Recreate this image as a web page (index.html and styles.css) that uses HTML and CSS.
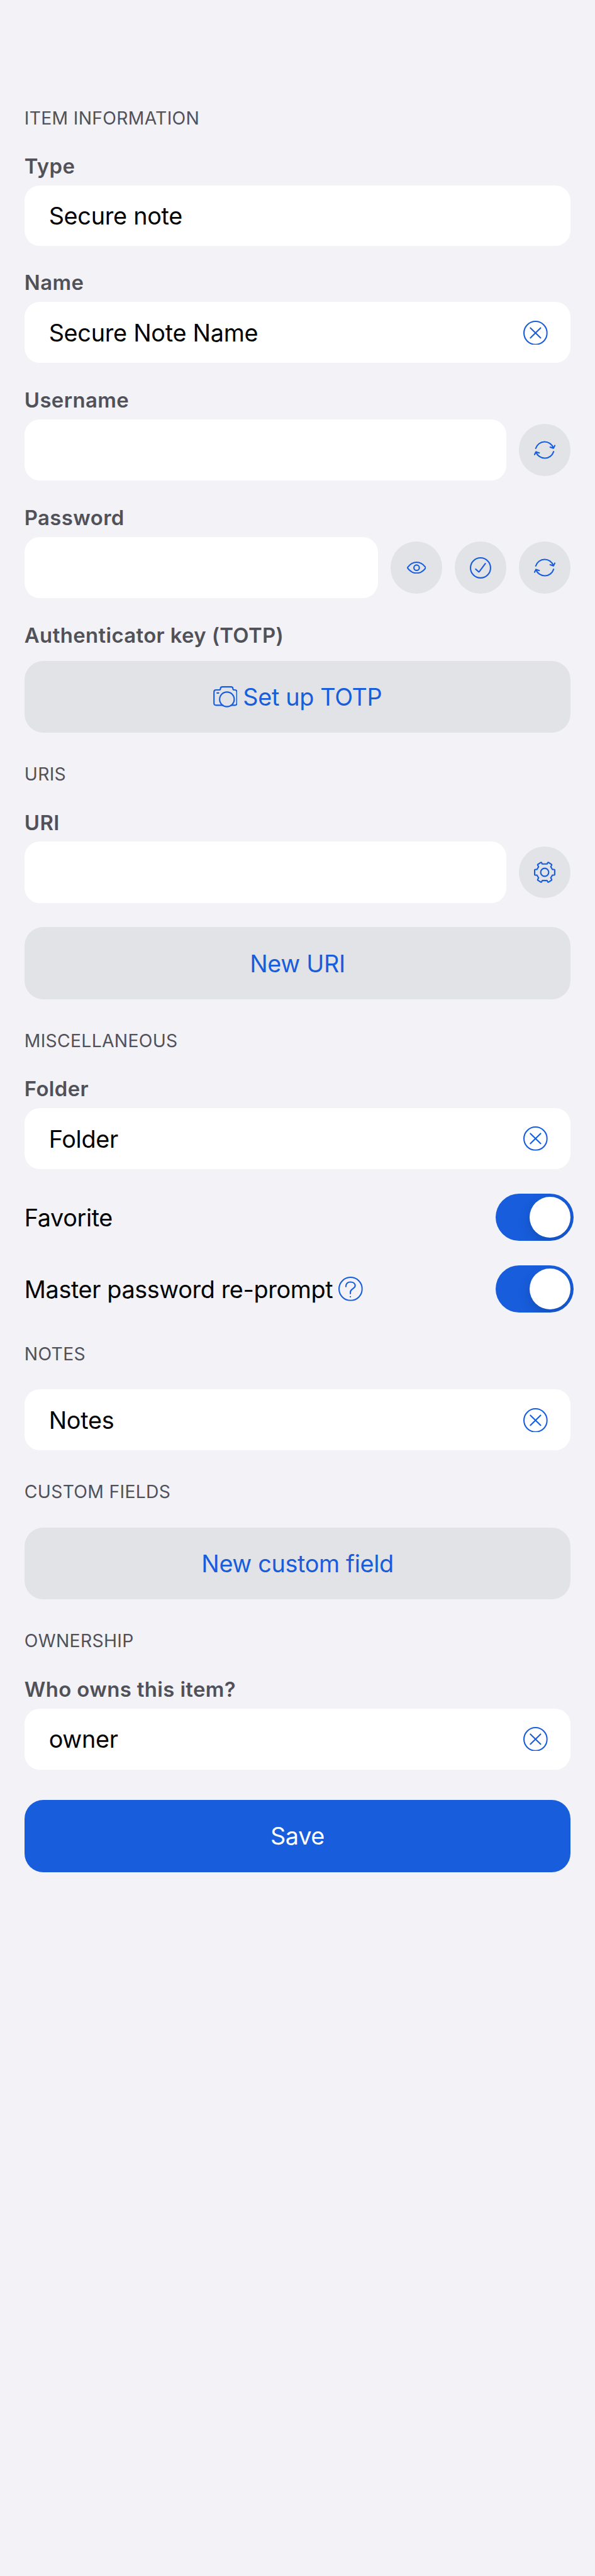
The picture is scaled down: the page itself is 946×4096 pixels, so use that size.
FILE: index.html
```html
<!DOCTYPE html>
<html lang="en">
<head>
<meta charset="utf-8">
<title>Edit item</title>
<link rel="stylesheet" href="styles.css">
</head>
<body>
<svg class="defs" aria-hidden="true">
  <symbol id="clear" viewBox="0 0 48 48"><circle cx="24" cy="24" r="22.7"/><path d="M14 14.2 34 33.8M34 14.2 14 33.8"/></symbol>
  <symbol id="refresh" viewBox="0 0 42 36"><path d="M3.4 14.8A18.3 18.3 0 0 1 38.2 14.2M31.900 12.300l6.300 2.200L41 9.200M38.600 21.200A18.300 18.300 0 0 1 3.900 22M10.300 23.700 3.900 21.500 1.200 26.900"/></symbol>
  <symbol id="eye" viewBox="0 0 38 24"><path d="M1.900 13.400Q.8 12 1.900 10.600C6.500 4.700 12.500 1.300 19 1.300S31.500 4.700 36.100 10.600Q37.200 12 36.100 13.400C31.500 19.300 25.500 22.700 19 22.700S6.500 19.300 1.900 13.400Z"/><circle cx="19" cy="12" r="5.300"/></symbol>
  <symbol id="check" viewBox="0 0 42 42"><circle cx="21" cy="21" r="19.700"/><path d="m11.600 23.400 5.300 5.100q.8.8 1.500 0l12-15.900"/></symbol>
  <symbol id="gear" viewBox="0 0 42 42"><path d="M36.200 15.500h3.300q1.200 0 1.200 1.200v8.600q0 1.200-1.200 1.200h-3.300l-3.200 5.400 1.800 3.200q.5.900-.4 1.500l-5.800 3.700q-1 .6-1.500-.4l-1.300-2.600h-9.600l-1.300 2.600q-.5 1-1.500.4l-5.800-3.700q-.9-.6-.4-1.500l1.800-3.200-3.200-5.400h-3.300q-1.200 0-1.200-1.200v-8.600q0-1.200 1.200-1.200h3.300l3.200-5.400-1.800-3.200q-.5-.9.4-1.500l5.800-3.700q1-.6 1.500.4l1.300 2.600h9.600l1.300-2.600q.5-1 1.500-.4l5.800 3.700q.9.600.4 1.500l-1.800 3.200Z"/><circle cx="21" cy="21" r="7.900"/></symbol>
  <symbol id="camera" viewBox="0 0 48 42"><path d="M18 37.600H5.500q-4 0-4-4V11.500q0-4 4-4h6.300q2.400 0 2.400-2.200 0-3.900 4-3.900h16.600q4 0 4 3.900 0 2.200 2.400 2.200h1.300q4 0 4 4v22.100q0 4-4 4H36M7.500 13.400h3.200"/><circle cx="27" cy="26" r="14.400"/></symbol>
  <symbol id="help" viewBox="0 0 48 48"><circle cx="24" cy="24" r="22.700"/><path d="M14.700 19.500c0-6.200 3.800-9 9-9 5.400 0 9.300 3 9.300 7.500 0 5.500-9.400 6-9.400 12v3.300M23.600 39.400v.2"/></symbol>
</svg>
<main class="form">
  <section class="section">
    <h2 class="heading">ITEM INFORMATION</h2>
    <div class="field"><label class="label">Type</label><div class="box box-menu"><span>Secure note</span></div></div>
    <div class="field"><label class="label">Name</label><div class="box"><span>Secure Note Name</span><svg class="icon i48"><use href="#clear"/></svg></div></div>
    <div class="field"><label class="label">Username</label>
      <div class="row"><div class="box"></div><button class="round"><svg class="icon i-refresh"><use href="#refresh"/></svg></button></div></div>
    <div class="field"><label class="label">Password</label>
      <div class="row"><div class="box"></div><button class="round"><svg class="icon i-eye"><use href="#eye"/></svg></button><button class="round"><svg class="icon i42"><use href="#check"/></svg></button><button class="round"><svg class="icon i-refresh"><use href="#refresh"/></svg></button></div></div>
    <div class="field field-loose"><label class="label">Authenticator key (TOTP)</label>
      <button class="button"><svg class="icon i-camera"><use href="#camera"/></svg><span>Set up TOTP</span></button></div>
  </section>
  <section class="section">
    <h2 class="heading">URIS</h2>
    <div class="field"><label class="label">URI</label>
      <div class="row"><div class="box"></div><button class="round"><svg class="icon i42"><use href="#gear"/></svg></button></div></div>
    <button class="button">New URI</button>
  </section>
  <section class="section">
    <h2 class="heading">MISCELLANEOUS</h2>
    <div class="field"><label class="label">Folder</label><div class="box"><span>Folder</span><svg class="icon i48"><use href="#clear"/></svg></div></div>
    <div class="toggle-row"><span>Favorite</span><div class="toggle"><div class="knob"></div></div></div>
    <div class="toggle-row"><span>Master password re-prompt</span><svg class="icon i48"><use href="#help"/></svg><div class="toggle"><div class="knob"></div></div></div>
  </section>
  <section class="section">
    <h2 class="heading">NOTES</h2>
    <div class="box"><span>Notes</span><svg class="icon i48"><use href="#clear"/></svg></div>
  </section>
  <section class="section">
    <h2 class="heading">CUSTOM FIELDS</h2>
    <button class="button">New custom field</button>
  </section>
  <section class="section">
    <h2 class="heading">OWNERSHIP</h2>
    <div class="field"><label class="label">Who owns this item?</label><div class="box"><span>owner</span><svg class="icon i48"><use href="#clear"/></svg></div></div>
  </section>
  <button class="button button-primary">Save</button>
</main>
</body>
</html>
```
FILE: styles.css
```css
/* 1rem is ten design pixels (a 3x canvas 1170 wide) */
html { font-size: 8.0885px; background: #f2f2f7; }
body { margin: 0; font-family: Inter, "Liberation Sans", sans-serif; color: #000; }
.defs { position: absolute; width: 0; height: 0; }

.form { display: flex; flex-direction: column; gap: 6rem; padding: 21.1rem 4.8rem 0; }
.section { display: flex; flex-direction: column; gap: 4.8rem; }
.heading { margin: 0; font-size: 3.5rem; line-height: 4.3rem; font-weight: 400; letter-spacing: .011em; color: #515159; }
.label { font-size: 4.07rem; line-height: 5.1rem; font-weight: 600; letter-spacing: .011em; color: #515159; }
.field { display: flex; flex-direction: column; gap: 1.2rem; }
.field-loose { gap: 2.4rem; }

.box { box-sizing: border-box; flex: 1 1 auto; display: flex; align-items: center; justify-content: space-between; height: 12rem; padding: 0 4.5rem 0 4.8rem; border-radius: 3rem; background: #fff; font-size: 4.67rem; letter-spacing: -.007em; }
.box-menu { flex: none; height: 11.8rem; }
.row { display: flex; align-items: center; gap: 2.4rem; }

button { border: 0; padding: 0; font-family: inherit; }
.round { flex: none; display: flex; align-items: center; justify-content: center; width: 10.2rem; height: 10.2rem; border-radius: 50%; background: #e2e3e7; }
.button { display: flex; align-items: center; justify-content: center; gap: 1.1rem; height: 14.2rem; border-radius: 3.7rem; background: #e2e3e7; color: #175ddc; font-size: 4.67rem; letter-spacing: -.009em; }
.button-primary { background: #175ddc; color: #fff; }

.icon { flex: none; fill: none; stroke: #175ddc; stroke-width: 2.6; stroke-linecap: round; stroke-linejoin: round; }
.i48 { width: 4.8rem; height: 4.8rem; }
.i42 { width: 4.2rem; height: 4.2rem; }
.i-refresh { width: 4.2rem; height: 3.6rem; }
.i-eye { width: 3.8rem; height: 2.4rem; }
.i-camera { width: 4.8rem; height: 4.2rem; }

.toggle-row { display: flex; align-items: center; gap: 1.1rem; height: 9.3rem; margin-right: -.6rem; font-size: 4.67rem; letter-spacing: -.01em; }
.toggle { box-sizing: border-box; display: flex; justify-content: flex-end; width: 15.3rem; height: 9.3rem; margin-left: auto; padding: .6rem; border-radius: 4.65rem; background: #175ddc; overflow: hidden; }
.knob { width: 8.1rem; height: 8.1rem; border-radius: 50%; background: #fff; box-shadow: 0 .9rem 2.4rem rgba(0, 0, 0, .15); }
```
